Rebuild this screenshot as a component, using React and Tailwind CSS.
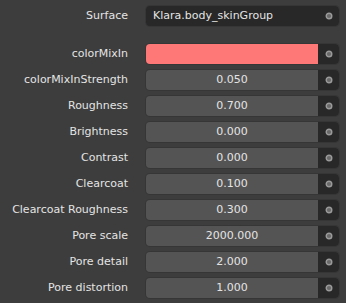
const rows = [
  ["colorMixInStrength", "0.050"],
  ["Roughness", "0.700"],
  ["Brightness", "0.000"],
  ["Contrast", "0.000"],
  ["Clearcoat", "0.100"],
  ["Clearcoat Roughness", "0.300"],
  ["Pore scale", "2000.000"],
  ["Pore detail", "2.000"],
  ["Pore distortion", "1.000"],
];

function Dot() {
  return (
    <svg width="8" height="8" viewBox="0 0 8 8">
      <circle cx="4" cy="4" r="2.8" fill="#6a6a6a" stroke="#9a9a9a" strokeWidth="1.4" />
    </svg>
  );
}

function Socket() {
  return (
    <div className="flex h-full w-[21px] shrink-0 items-center justify-center rounded-r-[4px] bg-[#282828]">
      <Dot />
    </div>
  );
}

function Row({ label, children, className = "" }) {
  return (
    <div className={`flex h-5 items-center ${className}`}>
      <div className="w-[128px] shrink-0 text-right">{label}</div>
      <div className="ml-[18px] flex h-5 w-[193px] overflow-hidden rounded-[4px] shadow-[0_0_0_1px_#363636]">
        {children}
      </div>
    </div>
  );
}

export default function App() {
  return (
    <div
      className="h-[303px] w-[346px] bg-[#3d3d3d] pt-[6px] text-[11px] text-[#e4e4e4]"
      style={{ fontFamily: '"DejaVu Sans", sans-serif' }}
    >
      <Row label="Surface">
        <div className="flex flex-1 items-center bg-[#282828] pl-[7px]">Klara.body_skinGroup</div>
        <Socket />
      </Row>
      <Row label="colorMixIn" className="mt-[18px]">
        <div className="flex-1 bg-[#fe7878]" />
        <Socket />
      </Row>
      {rows.map(([label, value]) => (
        <Row key={label} label={label} className="mt-[6px]">
          <div className="flex flex-1 items-center justify-center bg-[#545454]">{value}</div>
          <Socket />
        </Row>
      ))}
    </div>
  );
}
